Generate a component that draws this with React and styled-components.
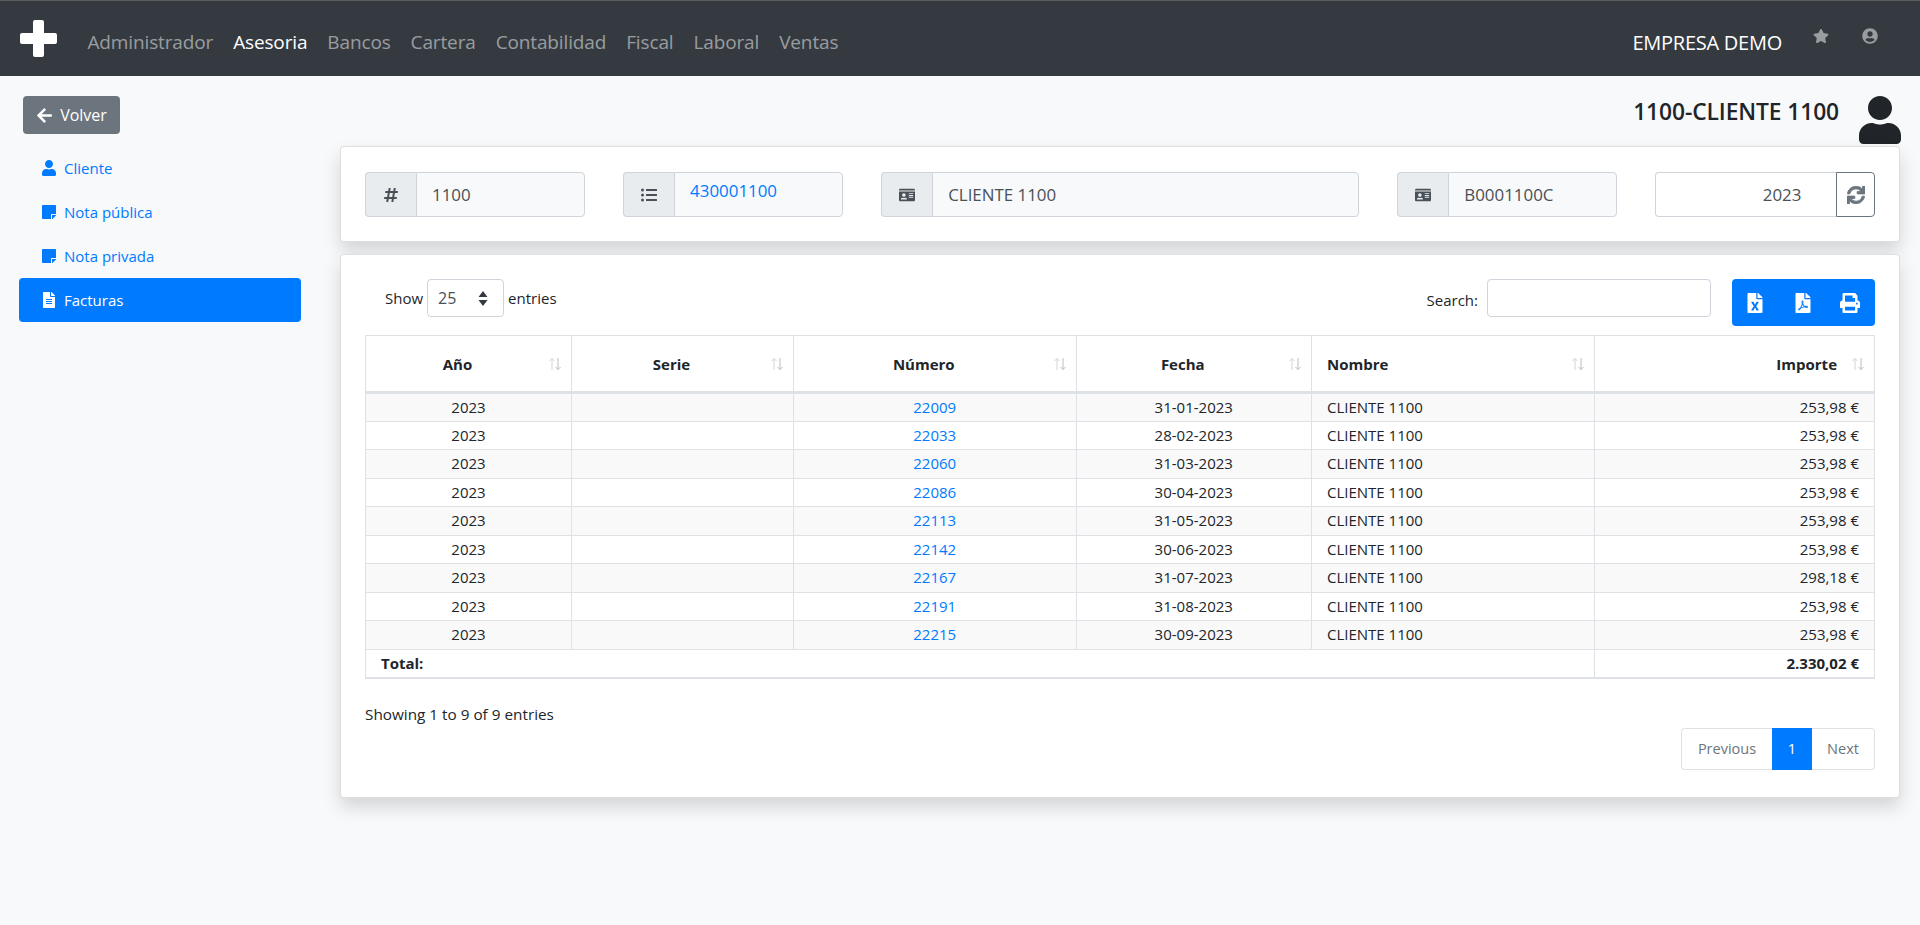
import React from "react";
import styled, { createGlobalStyle } from "styled-components";
import {
  FaArrowLeft, FaUser, FaStickyNote, FaFileAlt, FaHashtag, FaListUl, FaIdCard, FaSync,
  FaStar, FaUserCircle, FaFileExcel, FaFilePdf, FaPrint,
} from "react-icons/fa";

const Global = createGlobalStyle`
  html, body { margin: 0; padding: 0; background: #f8f9fa; }
  body { font-family: "Open Sans", "Liberation Sans", sans-serif; color: #212529; min-height: 925px; }
  * { box-sizing: border-box; }
`;

const Navbar = styled.nav`
  height: 76px; background: #343a40; border-top: 1px solid #5c5c5c;
  display: flex; align-items: center; padding: 0 42px 0 20px;
`;
const Logo = styled.svg`width: 37px; height: 37px; margin-right: 20.5px; flex: none; margin-top: -1px;`;
const NavLink = styled.a`
  font-size: 19px; letter-spacing: -0.14px; color: ${p => (p.$active ? "#fff" : "rgba(255,255,255,.5)")};
  padding: 0 10px; line-height: 24px; margin-top: 7px;
`;
const NavRight = styled.div`margin-left: auto; display: flex; align-items: center;`;
const Company = styled.span`font-size: 20px; letter-spacing: -0.25px; color: #fff; margin-right: 31px; margin-top: 7px;`;
const NavIcon = styled.span`
  color: rgba(255,255,255,.5); display: flex; font-size: ${p => p.$size}px;
  margin-left: ${p => p.$gap || 0}px; margin-top: -6px;
`;

const TopRow = styled.div`
  height: 70px; padding: 20px 16px 0 23px; display: flex; justify-content: space-between; align-items: flex-start;
`;
const BackButton = styled.a`
  width: 97px; height: 38px; border-radius: 4px; background: #6c757d; color: #fff; font-size: 16px;
  display: flex; align-items: center; justify-content: center; gap: 7px;
`;
const ClientTitle = styled.div`display: flex; align-items: flex-start; gap: 17px;`;
const ClientName = styled.h1`
  margin: 0; font-size: 22.8px; font-weight: 600; line-height: 32px; color: #212529; letter-spacing: -0.1px;
`;

const Body = styled.div`display: flex; align-items: flex-start;`;
const Sidebar = styled.aside`width: 282px; margin: 0 39px 0 19px; flex: none;`;
const SideItem = styled.a`
  height: 44px; display: flex; align-items: center; gap: 8px; padding-left: 23px; font-size: 15px;
  border-radius: 4px; color: ${p => (p.$active ? "#fff" : "#007bff")};
  background: ${p => (p.$active ? "#007bff" : "transparent")};
  svg { width: 14px; height: 16px; flex: none; }
`;

const Content = styled.main`width: 1560px; display: flex; flex-direction: column; gap: 12px;`;
const Card = styled.section`
  background: #fff; border: 1px solid rgba(0,0,0,.125); border-radius: 4px; padding: ${p => p.$pad};
  box-shadow: 0 9px 18px rgba(0,0,0,.15);
`;
const FieldRow = styled.div`display: grid; grid-template-columns: 219.5px 219.5px 477.5px 219.5px 219.5px; gap: 38.6px;`;
const Group = styled.div`display: flex; height: 45px;`;
const Addon = styled.span`
  width: 51px; flex: none; background: #e9ecef; border: 1px solid #ced4da; border-right: 0;
  border-radius: 4px 0 0 4px; display: flex; align-items: center; justify-content: center; color: #495057; font-size: 16px;
`;
const Field = styled.div`
  flex: 1; min-width: 0; background: ${p => (p.$white ? "#fff" : "#f8f9fa")};
  border: 1px solid #ced4da; border-radius: ${p => (p.$white ? "4px 0 0 4px" : "0 4px 4px 0")};
  ${p => (p.$white ? "border-right: 0;" : "")}
  display: flex; align-items: center; padding: 0 ${p => (p.$white ? 35 : 15)}px 0 15px; font-size: 16.9px; color: #495057;
  justify-content: ${p => (p.$white ? "flex-end" : "flex-start")};
`;
const FieldLink = styled.a`color: #007bff; margin-top: -8px;`;
const RefreshButton = styled.span`
  width: 38.5px; flex: none; border: 1px solid #6c757d; border-radius: 0 4px 4px 0; display: flex;
  align-items: center; justify-content: center; color: #6c757d; font-size: 18px;
  svg { stroke: currentColor; stroke-width: 24px; }
`;

const Controls = styled.div`display: flex; justify-content: space-between; align-items: flex-start; height: 56px;`;
const Length = styled.div`display: flex; align-items: center; height: 38px; padding-left: 20px; font-size: 15px; gap: 4px;`;
const SelectBox = styled.div`
  width: 77px; height: 38px; border: 1px solid #ced4da; border-radius: 4px; background: #fff; color: #495057;
  font-size: 16px; display: flex; align-items: center; padding-left: 10px; justify-content: space-between; padding-right: 15px;
`;
const RightControls = styled.div`display: flex; align-items: flex-start;`;
const SearchLabel = styled.span`font-size: 15px; line-height: 42px; margin-right: 9px;`;
const SearchBox = styled.div`width: 224px; height: 38px; border: 1px solid #ced4da; border-radius: 4px; background: #fff; margin-right: 21px;`;
const ExportGroup = styled.div`
  width: 143px; height: 47px; background: #007bff; border-radius: 4px; color: #fff; display: flex; align-items: center;
  padding: 0 15px 0 13px; justify-content: space-between;
  svg { height: 20px; width: auto; }
`;

const Table = styled.table`
  width: 100%; border-collapse: collapse; table-layout: fixed; border: 1px solid #dee2e6;
  th, td { border: 1px solid #dee2e6; }
`;
const Th = styled.th`
  height: 57px; border-bottom-width: 3px !important; position: relative; font-size: 15px; font-weight: 700;
  text-align: ${p => p.$align || "center"}; padding: 0 ${p => (p.$align === "right" ? 37 : 30)}px 0 ${p => (p.$align === "left" ? 15 : 8)}px;
`;
const SortIcon = styled.svg`position: absolute; right: 9px; top: 21px; width: 14px; height: 14px;`;
const Tr = styled.tr`background: ${p => (p.$odd ? "#f9f9f9" : "#fff")};`;
const Td = styled.td`
  height: 28.5px; padding: 0 15px; line-height: 19px; white-space: nowrap; font-size: 15px;
  text-align: ${p => p.$align || "center"};
`;
const TdLink = styled.a`color: #007bff;`;
const TotalRow = styled.tr`
  border-bottom: 2px solid #dee2e6;
  td { font-weight: 700; height: 28.5px; }
`;

const Footer = styled.div`display: flex; flex-direction: column; margin-top: 25px;`;
const Info = styled.div`font-size: 15.3px; line-height: 20px;`;
const Pagination = styled.div`display: flex; align-self: flex-end; margin-top: 4px; height: 42px; margin-bottom: 2px;`;
const PageButton = styled.a`
  display: flex; align-items: center; justify-content: center; width: ${p => p.$w}px; font-size: 14.5px;
  color: ${p => (p.$active ? "#fff" : "#6c757d")}; background: ${p => (p.$active ? "#007bff" : "#fff")};
  border: 1px solid ${p => (p.$active ? "#007bff" : "#dee2e6")};
  ${p => (p.$first ? "border-radius: 4px 0 0 4px; border-right: 0;" : "")}
  ${p => (p.$last ? "border-radius: 0 4px 4px 0; border-left: 0;" : "")}
`;

const rows = [
  ["22009", "31-01-2023", "253,98 €"], ["22033", "28-02-2023", "253,98 €"], ["22060", "31-03-2023", "253,98 €"],
  ["22086", "30-04-2023", "253,98 €"], ["22113", "31-05-2023", "253,98 €"], ["22142", "30-06-2023", "253,98 €"],
  ["22167", "31-07-2023", "298,18 €"], ["22191", "31-08-2023", "253,98 €"], ["22215", "30-09-2023", "253,98 €"],
];

const Sort = () => (
  <SortIcon viewBox="0 0 14 14" fill="none" strokeWidth="1">
    <path d="M4 13V1.5M1.5 4L4 1.5 6.5 4" stroke="#d4d4d4" />
    <path d="M10 1v11.5M7.5 10l2.5 2.5 2.5-2.5" stroke="#bdbdbd" />
  </SortIcon>
);

const nav = ["Administrador", "Asesoria", "Bancos", "Cartera", "Contabilidad", "Fiscal", "Laboral", "Ventas"];

export default function App() {
  return (
    <>
      <Global />
      <Navbar>
        <Logo viewBox="0 0 37 37"><path d="M15 0h7a2 2 0 0 1 2 2v11h11a2 2 0 0 1 2 2v7a2 2 0 0 1-2 2H24v11a2 2 0 0 1-2 2h-7a2 2 0 0 1-2-2V24H2a2 2 0 0 1-2-2v-7a2 2 0 0 1 2-2h11V2a2 2 0 0 1 2-2z" fill="#fff" /></Logo>
        {nav.map(n => <NavLink key={n} $active={n === "Asesoria"}>{n}</NavLink>)}
        <NavRight>
          <Company>EMPRESA DEMO</Company>
          <NavIcon $size={16}><FaStar /></NavIcon>
          <NavIcon $size={16} $gap={33}><FaUserCircle /></NavIcon>
        </NavRight>
      </Navbar>
      <TopRow>
        <BackButton><FaArrowLeft size={17} />Volver</BackButton>
        <ClientTitle>
          <ClientName>1100-CLIENTE 1100</ClientName>
          <FaUser size={48} color="#212529" />
        </ClientTitle>
      </TopRow>
      <Body>
        <Sidebar>
          <SideItem><FaUser />Cliente</SideItem>
          <SideItem><FaStickyNote />Nota pública</SideItem>
          <SideItem><FaStickyNote />Nota privada</SideItem>
          <SideItem $active><FaFileAlt />Facturas</SideItem>
        </Sidebar>
        <Content>
          <Card $pad="25px 24px 24px">
            <FieldRow>
              <Group><Addon><FaHashtag /></Addon><Field>1100</Field></Group>
              <Group><Addon><FaListUl /></Addon><Field><FieldLink>430001100</FieldLink></Field></Group>
              <Group><Addon><FaIdCard /></Addon><Field>CLIENTE 1100</Field></Group>
              <Group><Addon><FaIdCard /></Addon><Field>B0001100C</Field></Group>
              <Group><Field $white>2023</Field><RefreshButton><FaSync /></RefreshButton></Group>
            </FieldRow>
          </Card>
          <Card $pad="24px 24px 25px">
            <Controls>
              <Length>Show
                <SelectBox>25
                  <svg width="10" height="15" viewBox="0 0 10 15"><path d="M5 0l4.5 6h-9zM5 15L.5 9h9z" fill="#343a40" /></svg>
                </SelectBox>
                entries
              </Length>
              <RightControls>
                <SearchLabel>Search:</SearchLabel>
                <SearchBox />
                <ExportGroup><FaFileExcel /><FaFilePdf /><FaPrint /></ExportGroup>
              </RightControls>
            </Controls>
            <Table>
              <colgroup>
                <col style={{ width: 206 }} /><col style={{ width: 222 }} /><col style={{ width: 282.5 }} />
                <col style={{ width: 235.5 }} /><col style={{ width: 283 }} /><col />
              </colgroup>
              <thead>
                <tr>
                  <Th>Año<Sort /></Th>
                  <Th>Serie<Sort /></Th>
                  <Th>Número<Sort /></Th>
                  <Th>Fecha<Sort /></Th>
                  <Th $align="left">Nombre<Sort /></Th>
                  <Th $align="right">Importe<Sort /></Th>
                </tr>
              </thead>
              <tbody>
                {rows.map((r, i) => (
                  <Tr key={r[0]} $odd={i % 2 === 0}>
                    <Td>2023</Td>
                    <Td></Td>
                    <Td><TdLink>{r[0]}</TdLink></Td>
                    <Td>{r[1]}</Td>
                    <Td $align="left">CLIENTE 1100</Td>
                    <Td $align="right">{r[2]}</Td>
                  </Tr>
                ))}
                <TotalRow>
                  <Td colSpan={5} $align="left">Total:</Td>
                  <Td $align="right">2.330,02 €</Td>
                </TotalRow>
              </tbody>
            </Table>
            <Footer>
              <Info>Showing 1 to 9 of 9 entries</Info>
              <Pagination>
                <PageButton $first $w={91}>Previous</PageButton>
                <PageButton $active $w={40}>1</PageButton>
                <PageButton $last $w={63}>Next</PageButton>
              </Pagination>
            </Footer>
          </Card>
        </Content>
      </Body>
    </>
  );
}
